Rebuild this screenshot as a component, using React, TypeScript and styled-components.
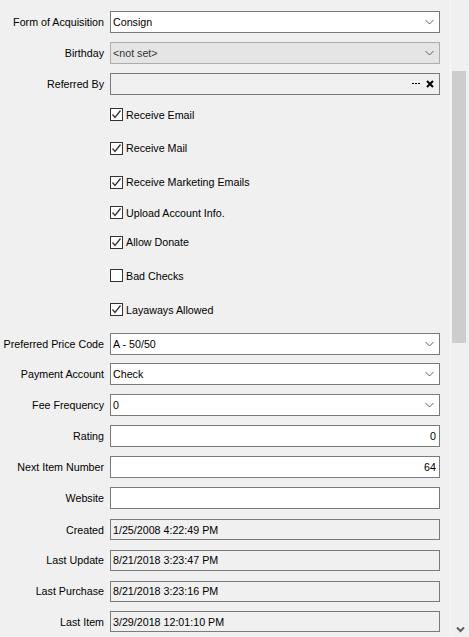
import styled, { createGlobalStyle } from "styled-components";

const GlobalStyle = createGlobalStyle`
  html, body {
    margin: 0;
    padding: 0;
    background: #f0f0f0;
  }
  * {
    box-sizing: border-box;
  }
`;

const Window = styled.div`
  width: 469px;
  height: 637px;
  overflow: hidden;
  display: flex;
  background: #f0f0f0;
  font-family: "Liberation Sans", Arial, sans-serif;
  font-size: 10.7px;
  color: #000;
`;

const Form = styled.div`
  width: 450px;
  padding-top: 7px;
  display: flex;
  flex-direction: column;
`;

const Row = styled.div<{ $h?: number; $mt?: number }>`
  height: ${(p) => p.$h ?? 31}px;
  margin-top: ${(p) => p.$mt ?? 0}px;
  display: grid;
  grid-template-columns: 104px 330px;
  column-gap: 6px;
  align-items: center;
`;

const Label = styled.div`
  text-align: right;
  white-space: nowrap;
`;

const Box = styled.div<{ $bg?: string; $border?: string; $h?: number }>`
  height: ${(p) => p.$h ?? 22}px;
  background: ${(p) => p.$bg ?? "#fff"};
  border: 1px solid ${(p) => p.$border ?? "#7a7a7a"};
  display: flex;
  align-items: center;
  padding: 0 3px 0 2px;
  color: ${(p) => (p.$bg === "#e5e5e5" ? "#333" : "#000")};
`;

const Value = styled.span<{ $right?: boolean }>`
  flex: 1;
  white-space: nowrap;
  text-align: ${(p) => (p.$right ? "right" : "left")};
`;

const IconSlot = styled.span`
  display: flex;
  align-items: center;
  gap: 6px;
  margin-right: 2px;
`;

const CheckRow = styled.label`
  grid-column: 2;
  display: flex;
  align-items: center;
  gap: 3px;
`;

const CheckBox = styled.span`
  width: 13px;
  height: 13px;
  border: 1px solid #333;
  background: #fff;
  display: flex;
  align-items: center;
  justify-content: center;
`;

const Scrollbar = styled.div`
  width: 19px;
  height: 637px;
  background: #f0f0f0;
  border-left: 1px solid #f7f7f7;
  padding: 71px 3px 0 1px;
  position: relative;
`;

const Thumb = styled.div`
  width: 14px;
  height: 272px;
  background: #cdcdcd;
`;

const ArrowDown = styled.div`
  position: absolute;
  left: 5px;
  bottom: 4px;
  width: 9px;
  height: 7px;
  display: flex;
`;

const Chevron = () => (
  <svg width="9" height="6" viewBox="0 0 9 6">
    <polyline points="0.5,1 4.5,5 8.5,1" fill="none" stroke="#606060" strokeWidth="1" />
  </svg>
);

const Check = () => (
  <svg width="11" height="11" viewBox="0 0 11 11">
    <polyline points="1.5,5.5 4,8.5 9.5,1.5" fill="none" stroke="#333" strokeWidth="1.3" />
  </svg>
);

const ClearX = () => (
  <svg width="8" height="8" viewBox="0 0 8 8">
    <path d="M1 1 L7 7 M7 1 L1 7" stroke="#000" strokeWidth="2" />
  </svg>
);

const Dots = () => (
  <svg width="8" height="3" viewBox="0 0 8 3">
    <rect x="0" y="1" width="2" height="1" fill="#000" />
    <rect x="3" y="1" width="2" height="1" fill="#000" />
    <rect x="6" y="1" width="2" height="1" fill="#000" />
  </svg>
);

type Combo = { label: string; value: string; disabled?: boolean; mt?: number };

const Select = ({ label, value, disabled, mt }: Combo) => (
  <Row $mt={mt}>
    <Label>{label}</Label>
    <Box $bg={disabled ? "#e5e5e5" : "#fff"} $border={disabled ? "#adadad" : "#7a7a7a"}>
      <Value>{value}</Value>
      <IconSlot>
        <Chevron />
      </IconSlot>
    </Box>
  </Row>
);

const checks: { label: string; checked: boolean; h: number }[] = [
  { label: "Receive Email", checked: true, h: 32 },
  { label: "Receive Mail", checked: true, h: 36 },
  { label: "Receive Marketing Emails", checked: true, h: 32 },
  { label: "Upload Account Info.", checked: true, h: 30 },
  { label: "Allow Donate", checked: true, h: 30 },
  { label: "Bad Checks", checked: false, h: 38 },
  { label: "Layaways Allowed", checked: true, h: 30 },
];

const stamps = [
  { label: "Created", value: "1/25/2008 4:22:49 PM", mt: 1 },
  { label: "Last Update", value: "8/21/2018 3:23:47 PM", mt: 0 },
  { label: "Last Purchase", value: "8/21/2018 3:23:16 PM", mt: 0 },
  { label: "Last Item", value: "3/29/2018 12:01:10 PM", mt: 0 },
];

export default function App() {
  return (
    <>
      <GlobalStyle />
      <Window>
        <Form>
          <Select label="Form of Acquisition" value="Consign" />
          <Select label="Birthday" value="<not set>" disabled />
          <Row>
            <Label>Referred By</Label>
            <Box $bg="#f0f0f0">
              <Value />
              <IconSlot>
                <Dots />
                <ClearX />
              </IconSlot>
            </Box>
          </Row>
          {checks.map((c) => (
            <Row key={c.label} $h={c.h}>
              <CheckRow>
                <CheckBox>{c.checked && <Check />}</CheckBox>
                {c.label}
              </CheckRow>
            </Row>
          ))}
          <Select label="Preferred Price Code" value="A - 50/50" mt={4} />
          <Select label="Payment Account" value="Check" />
          <Select label="Fee Frequency" value="0" />
          <Row>
            <Label>Rating</Label>
            <Box>
              <Value $right>0</Value>
            </Box>
          </Row>
          <Row $mt={1}>
            <Label>Next Item Number</Label>
            <Box>
              <Value $right>64</Value>
            </Box>
          </Row>
          <Row>
            <Label>Website</Label>
            <Box>
              <Value />
            </Box>
          </Row>
          {stamps.map((s) => (
            <Row key={s.label} $mt={s.mt}>
              <Label>{s.label}</Label>
              <Box $bg="#f0f0f0" $h={21}>
                <Value>{s.value}</Value>
              </Box>
            </Row>
          ))}
        </Form>
        <Scrollbar>
          <Thumb />
          <ArrowDown>
            <svg width="9" height="7" viewBox="0 0 9 7">
              <polyline points="1,1.5 4.5,5 8,1.5" fill="none" stroke="#606060" strokeWidth="2" />
            </svg>
          </ArrowDown>
        </Scrollbar>
      </Window>
    </>
  );
}
